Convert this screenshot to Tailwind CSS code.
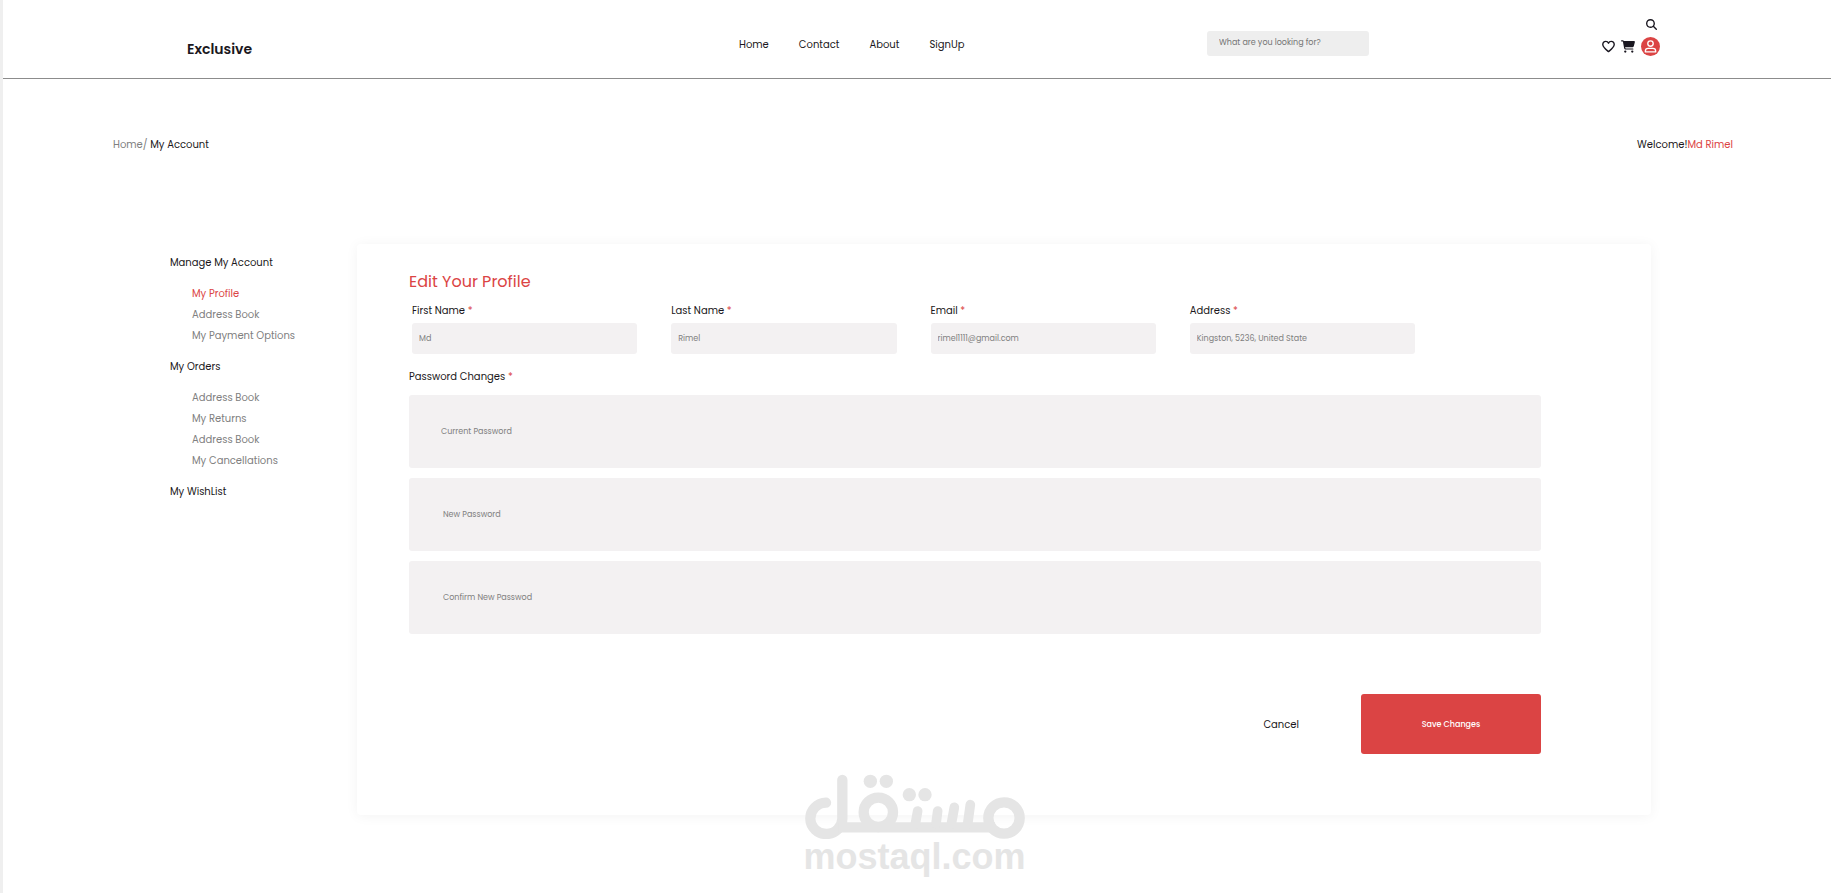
<!DOCTYPE html>
<html lang="en">
<head>
  <meta charset="UTF-8">
  <meta name="viewport" content="width=device-width, initial-scale=1.0">
  <title>Exclusive - My Account</title>
  <script src="https://cdn.jsdelivr.net/npm/@tailwindcss/browser@4"></script>
</head>
<body class="relative min-h-screen border-l-[3px] border-[#efefef] bg-white font-[Poppins,Inter,sans-serif] text-[10px] leading-[21px] text-[#1a1720]">

  <header class="grid grid-cols-[552fr_468fr_395fr_58px] items-center border-b border-[#8c8c8c] h-[79px] pl-[184px] pr-[171px]">
    <a href="#" class="pt-5 text-sm font-semibold">Exclusive</a>

    <nav class="flex gap-[30px] pt-[10px]">
      <a href="#">Home</a>
      <a href="#">Contact</a>
      <a href="#">About</a>
      <a href="#">SignUp</a>
    </nav>

    <div class="pt-2">
      <input type="search" aria-label="Search products" placeholder="What are you looking for?"
        class="block w-[162px] h-[25px] rounded-[3px] bg-[#eeeeee] px-3 text-[8px] placeholder:text-[#757575] focus:outline-none">
    </div>

    <div class="flex flex-wrap items-center justify-between gap-y-[7px] pb-1">
      <div class="flex w-full justify-end pr-[3px]">
        <button type="button" aria-label="Search">
          <svg class="block size-[11px]" viewBox="0 0 512 512" fill="currentColor"><path d="M416 208c0 45.900-14.900 88.300-40 122.700L502.600 457.400c12.500 12.500 12.500 32.800 0 45.300s-32.800 12.500-45.300 0L330.700 376c-34.400 25.200-76.800 40-122.700 40C93.100 416 0 322.900 0 208S93.100 0 208 0S416 93.100 416 208zM208 352a144 144 0 1 0 0-288 144 144 0 1 0 0 288z"/></svg>
        </button>
      </div>
      <button type="button" aria-label="Wishlist">
        <svg class="block size-[13px]" viewBox="0 0 24 24" fill="none" stroke="currentColor" stroke-width="2.600" stroke-linejoin="round"><path d="M12 21.500C9 19 2 14 1.500 8.800C1.200 5.200 3.800 2.500 7 2.500c2.200 0 4 1.300 5 3.300c1-2 2.800-3.300 5-3.300c3.200 0 5.800 2.700 5.500 6.300C22 14 15 19 12 21.500z"/></svg>
      </button>
      <button type="button" aria-label="Cart">
        <svg class="block w-[14px] h-[13px]" viewBox="0 0 576 512" fill="currentColor"><path d="M0 24C0 10.700 10.700 0 24 0H69.500c22 0 41.500 12.800 50.600 32h411c26.300 0 45.500 25 38.600 50.400l-41 152.300c-8.500 31.400-37 53.300-69.500 53.300H170.700l5.400 28.500c2.200 11.300 12.100 19.500 23.600 19.500H488c13.300 0 24 10.700 24 24s-10.700 24-24 24H199.700c-34.600 0-64.300-24.600-70.700-58.500L77.400 54.500c-.7-3.800-4-6.500-7.900-6.500H24C10.700 48 0 37.300 0 24zM128 464a48 48 0 1 1 96 0 48 48 0 1 1-96 0zm336-48a48 48 0 1 1 0 96 48 48 0 1 1 0-96z"/></svg>
      </button>
      <button type="button" aria-label="Account" class="rounded-full bg-[#db4444] p-[3px] text-white">
        <svg class="block size-[13px]" viewBox="0 0 24 24" fill="none" stroke="currentColor" stroke-width="2.500"><circle cx="12" cy="6.500" r="5"/><path d="M2.500 22v-1.500c0-3 2.200-5 5-5h9c2.800 0 5 2 5 5V22z" stroke-linejoin="round"/></svg>
      </button>
    </div>
  </header>

  <div class="flex justify-between pl-[110px] pr-[98px] pt-[55px]">
    <p><a href="#" class="text-[#808080]">Home/</a> My Account</p>
    <p>Welcome!<span class="text-[#db4444]">Md Rimel</span></p>
  </div>

  <main class="flex items-start pl-[167px] pr-[180px] pt-[89px]">
    <aside class="w-[187px] shrink-0 pt-2">
      <h2>Manage My Account</h2>
      <ul class="py-[10px] pl-[22px] text-[#808080]">
        <li><a href="#" class="text-[#db4444]">My Profile</a></li>
        <li><a href="#">Address Book</a></li>
        <li><a href="#">My Payment Options</a></li>
      </ul>
      <h2>My Orders</h2>
      <ul class="py-[10px] pl-[22px] text-[#808080]">
        <li><a href="#">Address Book</a></li>
        <li><a href="#">My Returns</a></li>
        <li><a href="#">Address Book</a></li>
        <li><a href="#">My Cancellations</a></li>
      </ul>
      <h2>My WishList</h2>
    </aside>

    <form class="flex-1 rounded-[4px] shadow-[0_1px_13px_rgba(0,0,0,0.05)] pl-[52px] pr-[110px] pt-[26px] pb-[61px]">
      <h1 class="text-base leading-6 text-[#db4444]">Edit Your Profile</h1>

      <div class="grid grid-cols-4 gap-[34px] pl-[3px] pr-[126px] pt-[6px]">
        <div>
          <label for="first-name">First Name <span class="text-[#db4444]">*</span></label>
          <input id="first-name" type="text" placeholder="Md" class="mt-[2px] block w-full h-[31px] rounded-[3px] bg-[#f3f1f2] px-[7px] text-[8px] placeholder:text-[#808080] focus:outline-none">
        </div>
        <div>
          <label for="last-name">Last Name <span class="text-[#db4444]">*</span></label>
          <input id="last-name" type="text" placeholder="Rimel" class="mt-[2px] block w-full h-[31px] rounded-[3px] bg-[#f3f1f2] px-[7px] text-[8px] placeholder:text-[#808080] focus:outline-none">
        </div>
        <div>
          <label for="email">Email <span class="text-[#db4444]">*</span></label>
          <input id="email" type="email" placeholder="rimel1111@gmail.com" class="mt-[2px] block w-full h-[31px] rounded-[3px] bg-[#f3f1f2] px-[7px] text-[8px] placeholder:text-[#808080] focus:outline-none">
        </div>
        <div>
          <label for="address">Address <span class="text-[#db4444]">*</span></label>
          <input id="address" type="text" placeholder="Kingston, 5236, United State" class="mt-[2px] block w-full h-[31px] rounded-[3px] bg-[#f3f1f2] px-[7px] text-[8px] placeholder:text-[#808080] focus:outline-none">
        </div>
      </div>

      <fieldset class="pt-3">
        <legend class="contents">Password Changes <span class="text-[#db4444]">*</span></legend>
        <div class="flex flex-col gap-[10px] pt-2">
          <input type="password" aria-label="Current Password" placeholder="Current Password" class="h-[73px] rounded-[3px] bg-[#f3f1f2] px-8 text-[8px] placeholder:text-[#808080] focus:outline-none">
          <input type="password" aria-label="New Password" placeholder="New Password" class="h-[73px] rounded-[3px] bg-[#f3f1f2] px-[34px] text-[8px] placeholder:text-[#808080] focus:outline-none">
          <input type="password" aria-label="Confirm New Password" placeholder="Confirm New Passwod" class="h-[73px] rounded-[3px] bg-[#f3f1f2] px-[34px] text-[8px] placeholder:text-[#808080] focus:outline-none">
        </div>
      </fieldset>

      <div class="flex items-center justify-end gap-[62px] pt-[60px]">
        <button type="reset">Cancel</button>
        <button type="submit" class="w-[180px] h-[60px] rounded-[3px] bg-[#db4444] text-[8px] font-medium text-white">Save Changes</button>
      </div>
    </form>
  </main>

  <!-- watermark -->
  <div class="pointer-events-none absolute left-0 right-[5px] bottom-[18px] flex flex-col items-center text-[#e5e5e5]">
    <svg class="block w-[220px] h-[65px]" viewBox="75 40 660 195" fill="none" stroke="currentColor" stroke-width="31" stroke-linecap="round">
      <circle cx="672" cy="172" r="47"/>
      <circle cx="295" cy="155" r="44"/>
      <path d="M187 58V172A48 47 0 1 1 138 126"/>
      <path d="M175 200H645" stroke-linecap="butt"/>
      <path d="M413 151L406 190M473 151L468 190M523 140L514 190M571 132L563 190" stroke-width="29"/>
      <g fill="currentColor" stroke="none">
        <circle cx="271" cy="62" r="20"/>
        <circle cx="319" cy="62" r="20"/>
        <circle cx="388" cy="102" r="20"/>
        <circle cx="435" cy="102" r="20"/>
      </g>
    </svg>
    <span class="font-['Liberation_Sans',sans-serif] text-4xl leading-9 font-bold">mostaql.com</span>
  </div>

</body>
</html>
